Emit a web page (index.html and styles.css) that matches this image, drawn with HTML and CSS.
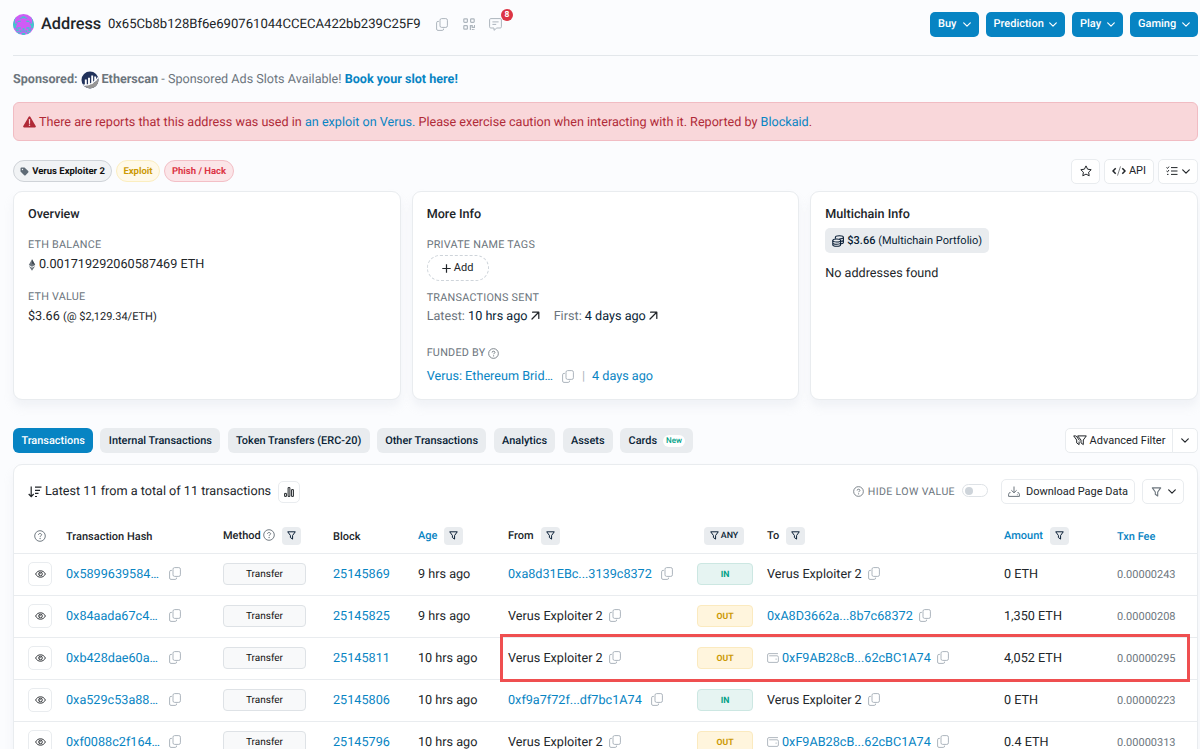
FILE: index.html
```html
<!DOCTYPE html>
<html lang="en">
<head>
    <meta charset="UTF-8">
    <meta name="viewport" content="width=device-width, initial-scale=1.0">
    <title>Address 0x65Cb8b128Bf6e690761044CCECA422bb239C25F9</title>
    <link rel="stylesheet" href="styles.css">
</head>
<body>
    <!-- Icon definitions -->
    <svg class="icon-defs" width="0" height="0">
        <symbol id="copy" viewBox="0 0 12 13"><rect x="4" y=".6" width="7.4" height="8.8" rx="1.6" fill="none" stroke="currentColor"/><path d="M2.9 3.4H2A1.4 1.4 0 0 0 .6 4.8V11A1.4 1.4 0 0 0 2 12.4h4.2A1.4 1.4 0 0 0 7.6 11v-.4" fill="none" stroke="currentColor"/></symbol>
        <symbol id="chevron" viewBox="0 0 8 5"><path d="M.7.8 4 4.1 7.3.8" fill="none" stroke="currentColor" stroke-width="1.2" stroke-linecap="round" stroke-linejoin="round"/></symbol>
        <symbol id="funnel" viewBox="0 0 10 10"><path d="M.8.9h8.4L6.2 5v4L3.8 7.3V5z" fill="none" stroke="currentColor" stroke-width="1.1" stroke-linejoin="round"/></symbol>
        <symbol id="help" viewBox="0 0 12 12"><circle cx="6" cy="6" r="5.3" fill="none" stroke="currentColor" stroke-width=".95"/><path d="M4.5 4.9c0-.9.6-1.4 1.5-1.4s1.6.5 1.6 1.3c0 1-1.5 1-1.5 2" fill="none" stroke="currentColor"/><circle cx="6.1" cy="8.5" r=".65" fill="currentColor"/></symbol>
        <symbol id="eye" viewBox="0 0 11 8"><path d="M.6 4C1.8 1.8 3.4.8 5.5.8S9.2 1.8 10.4 4C9.2 6.2 7.6 7.2 5.5 7.2S1.8 6.2.6 4z" fill="none" stroke="currentColor" stroke-width=".9"/><circle cx="5.5" cy="4" r="1.8" fill="none" stroke="currentColor" stroke-width=".9"/><path d="M4.2 4.2A1.3 1.3 0 0 0 5.5 2.9" fill="none" stroke="currentColor" stroke-width=".7"/></symbol>
        <symbol id="arrow" viewBox="0 0 9 9"><path d="M1.6 1.2h6.2v6.2M7.7 1.3 1 8" fill="none" stroke="currentColor" stroke-width="1.25" stroke-linecap="round" stroke-linejoin="round"/></symbol>
        <symbol id="wallet" viewBox="0 0 12 10"><path d="M10.6.6H2A1.4 1.4 0 0 0 .6 2v6A1.4 1.4 0 0 0 2 9.4h8A1.4 1.4 0 0 0 11.4 8V4.2A1.4 1.4 0 0 0 10 2.8H2.6" fill="none" stroke="currentColor" stroke-width=".95" stroke-linecap="round"/><circle cx="9.1" cy="6.1" r=".7" fill="currentColor"/></symbol>
    </svg>

    <!-- Page header -->
    <header class="page-header">
        <svg class="avatar" viewBox="0 0 22 22">
            <clipPath id="round"><circle cx="11" cy="11" r="11"/></clipPath>
            <g clip-path="url(#round)">
                <rect width="22" height="22" fill="#cf5cf5"/>
                <path d="M0 3h3v2H0zM19 3h3v2h-3zM0 5h2v7H0zM20 5h2v7h-2zM7 4h2v1H7zM13 4h2v1h-2zM9 2.500h4v2H9zM5 7h3v1.500H5zM14 7h3v1.500h-3zM2 10h2v2H2zM18 10h2v2h-2zM0 12h3v3H0zM19 12h3v3h-3zM5 14h3v1.500H5zM14 14h3v1.500h-3zM3 16h3v2H3zM16 16h3v2h-3zM7 17h2v2H7zM13 17h2v2h-2zM10 15h2v2h-2zM0 19h7v3H0zM15 19h7v3h-7zM9 20h4v2H9z" fill="#3ec8cc"/>
                <path d="M3 8h2v2H3zM17 8h2v2h-2zM3 14h2v2H3zM17 14h2v2h-2zM9 17h4v2H9z" fill="#8b85e8"/>
            </g>
        </svg>
        <h1>Address</h1>
        <span class="address">0x65Cb8b128Bf6e690761044CCECA422bb239C25F9</span>
        <svg class="copy-icon"><use href="#copy"/></svg>
        <svg class="qr-icon" viewBox="0 0 12 12" fill="none" stroke="currentColor" stroke-width="1.2">
            <rect x=".8" y=".8" width="3.6" height="3.6" rx=".8"/><rect x="7.6" y=".8" width="3.6" height="3.6" rx=".8"/><rect x=".8" y="7.6" width="3.6" height="3.6" rx=".8"/>
            <path d="M7.4 7v5M7 7.6h2.2v1.8h2.4V7M10.8 11v1M9.4 11v1"/>
        </svg>
        <span class="comments">
            <svg viewBox="0 0 13 13" fill="none" stroke="currentColor" stroke-linejoin="round"><path d="M1.8.6h9.4a1.2 1.2 0 0 1 1.2 1.2v7a1.2 1.2 0 0 1-1.2 1.2H7.8L5 12.3V10H1.8A1.2 1.2 0 0 1 .6 8.8v-7A1.2 1.2 0 0 1 1.8.6zM3.4 3.9h6.2M3.4 6.4h3.8"/></svg>
            <span class="count">8</span>
        </span>
        <nav class="promo-buttons">
            <a class="buy">Buy <svg class="chevron"><use href="#chevron"/></svg></a>
            <a class="prediction">Prediction <svg class="chevron"><use href="#chevron"/></svg></a>
            <a class="play">Play <svg class="chevron"><use href="#chevron"/></svg></a>
            <a class="gaming">Gaming <svg class="chevron"><use href="#chevron"/></svg></a>
        </nav>
    </header>

    <div class="sponsored">
        <b>Sponsored:</b>
        <svg viewBox="0 0 18 18"><clipPath id="logo"><circle cx="9" cy="9" r="8.5"/></clipPath><g clip-path="url(#logo)"><rect width="18" height="18" fill="#21325b"/><path d="M4.8 8.5V14M8 6.8V14M11.200 4.5V13M14.200 5.500V10" stroke="#fff" stroke-width="1.9"/><path d="M18 6.5C15 12 9 14.500 2 14.500V18h16z" fill="#979695"/><path d="M1 14.2C8 14.700 14.500 11.500 17.500 6" fill="none" stroke="#fcfcfd" stroke-width="1.3"/></g></svg>
        <span><b>Etherscan</b> - Sponsored Ads Slots Available! <a>Book your slot here!</a></span>
    </div>

    <div class="alert">
        <svg viewBox="0 0 13 12"><path d="M6.5.3a.9.9 0 0 1 .8.5l5.4 9.3a.9.9 0 0 1-.8 1.4H1.1a.9.9 0 0 1-.8-1.4L5.7.8a.9.9 0 0 1 .8-.5z" fill="currentColor"/><path d="M6.5 3.6v3.7" stroke="#f8d7da" stroke-width="1.2" stroke-linecap="round"/><circle cx="6.5" cy="9.3" r=".75" fill="#f8d7da"/></svg>
        <span>There are reports that this address was used in <a>an exploit on Verus.</a> Please exercise caution when interacting with it. Reported by <a>Blockaid</a>.</span>
    </div>

    <!-- Labels and page actions -->
    <div class="labels">
        <span class="label label-name"><svg viewBox="0 0 9 9"><path d="M.5 1.5a1 1 0 0 1 1-1h3L8.2 4.1a1 1 0 0 1 0 1.4L5.6 8.2a1 1 0 0 1-1.4 0L.5 4.5z" fill="#5f6b76"/><circle cx="2.5" cy="2.5" r=".7" fill="#f1f3f5"/></svg>Verus Exploiter 2</span>
        <span class="label label-exploit">Exploit</span>
        <span class="label label-phish">Phish / Hack</span>
        <div class="actions">
            <button class="btn btn-star"><svg viewBox="0 0 12 12"><path d="m6 .9 1.6 3.3 3.6.5-2.6 2.5.6 3.6L6 9.1l-3.2 1.7.6-3.6L.8 4.7l3.6-.5z" fill="none" stroke="currentColor" stroke-linejoin="round"/></svg></button>
            <button class="btn btn-api"><svg viewBox="0 0 14 10"><path d="M3.7 2.2 1 5l2.7 2.8M10.3 2.2 13 5l-2.7 2.8" fill="none" stroke="currentColor" stroke-width="1.5"/><path d="M8.5.4 5.5 9.6" stroke="currentColor" stroke-width=".8" opacity=".7"/></svg>API</button>
            <button class="btn btn-list"><svg class="list" viewBox="0 0 12 10"><path d="m.5 1.5 1 .9L3 .6M.5 5l1 .9L3 4M5 1.6h6.5M5 5h6.5M5 8.4h6.5M1 8.4h1.5" fill="none" stroke="currentColor"/></svg><svg class="chevron"><use href="#chevron"/></svg></button>
        </div>
    </div>

    <!-- Summary cards -->
    <section class="cards">
        <div class="card">
            <h2>Overview</h2>
            <h3>ETH BALANCE</h3>
            <p class="balance"><svg viewBox="0 0 8 13"><path d="M4 .3 7.5 6.5 4 8.5.5 6.5zM.6 7.5 4 9.5l3.4-2L4 12.6z" fill="#6c757d"/><path d="M4 .3 7.5 6.5 4 5z" fill="#3f474f"/></svg>0.001719292060587469 ETH</p>
            <h3 class="value-title">ETH VALUE</h3>
            <p>$3.66 <small>(@ $2,129.34/ETH)</small></p>
        </div>
        <div class="card more-info">
            <h2>More Info</h2>
            <h3>PRIVATE NAME TAGS</h3>
            <button class="add"><svg viewBox="0 0 9 9"><path d="M4.5.3v8.4M.3 4.5h8.4" stroke="currentColor" stroke-width="1.2"/></svg>Add</button>
            <h3>TRANSACTIONS SENT</h3>
            <p class="sent"><span class="muted">Latest:</span> <b>10 hrs ago</b> <svg><use href="#arrow"/></svg><span class="muted first">First:</span> <b>4 days ago</b> <svg><use href="#arrow"/></svg></p>
            <h3 class="funded-title">FUNDED BY <svg><use href="#help"/></svg></h3>
            <p class="funded"><a>Verus: Ethereum Brid…</a><svg class="copy-icon"><use href="#copy"/></svg><span class="divider">|</span><a>4 days ago</a></p>
        </div>
        <div class="card">
            <h2>Multichain Info</h2>
            <span class="portfolio"><svg viewBox="0 0 12 12" fill="none" stroke="currentColor" stroke-width="1.1"><ellipse cx="4.7" cy="5.5" rx="3.9" ry="1.5"/><path d="M.8 5.5v4.3c0 .9 1.7 1.5 3.9 1.5s3.9-.6 3.9-1.5V5.5M.8 7.7c0 .9 1.7 1.5 3.9 1.5s3.9-.6 3.9-1.5M3.4 3.7V2.3C3.4 1.4 5.2.8 7.4.8s4 .6 4 1.5-1.8 1.5-4 1.5M11.4 2.3v5.2c0 .6-.8 1.1-2.4 1.3M11.4 4.9c0 .6-.8 1.1-2.4 1.3"/></svg><b>$3.66</b>&nbsp;(Multichain Portfolio)</span>
            <p class="no-addresses">No addresses found</p>
        </div>
    </section>

    <!-- Tabs -->
    <nav class="tabs">
        <a class="tab active">Transactions</a>
        <a class="tab">Internal Transactions</a>
        <a class="tab">Token Transfers (ERC-20)</a>
        <a class="tab">Other Transactions</a>
        <a class="tab">Analytics</a>
        <a class="tab">Assets</a>
        <a class="tab">Cards <span class="new">New</span></a>
        <div class="btn-group">
            <button class="btn"><svg viewBox="0 0 14 11"><path d="M4.6.9h8.7L10.3 5v4.6L8 7.9V5z" fill="none" stroke="currentColor" stroke-linejoin="round"/><path d="M2.8.9H.7l3 4.1v2.9l2.4 1.7V6.5M3.2.9l3.2 4.5" fill="none" stroke="currentColor" stroke-linejoin="round"/></svg>Advanced Filter</button>
            <button class="btn caret"><svg class="chevron"><use href="#chevron"/></svg></button>
        </div>
    </nav>

    <!-- Transactions -->
    <section class="card transactions">
        <div class="toolbar">
            <svg class="sort" viewBox="0 0 14 12"><path d="M3.2.6v10M.7 8l2.5 2.7L5.7 8M7 1.2h6.5M7 4.3h5M7 7.4h3.5M7 10.5h2" fill="none" stroke="currentColor" stroke-width="1.2"/></svg>
            <span class="total">Latest 11 from a total of 11 transactions</span>
            <button class="btn chart"><svg viewBox="0 0 10 10"><path d="M.6 6.4h1.8v3H.6zM4.1.6h1.8v8.8H4.1zM7.6 2.6h1.8v6.8H7.6z" fill="none" stroke="currentColor" stroke-linejoin="round"/></svg></button>
            <span class="hide-low"><svg><use href="#help"/></svg>HIDE LOW VALUE</span>
            <span class="switch"></span>
            <button class="btn download"><svg viewBox="0 0 12 11"><path d="M6 .5v6M3.4 4.3 6 6.8l2.6-2.5M2.5 6.6h-1l-.9 1.6v2.2h10.8V8.2l-.9-1.6h-1" fill="none" stroke="#6c757d" stroke-linejoin="round"/><circle cx="9.3" cy="8.7" r=".5" fill="#6c757d"/></svg>Download Page Data</button>
            <button class="btn filter-menu"><svg class="funnel"><use href="#funnel"/></svg><svg class="chevron"><use href="#chevron"/></svg></button>
        </div>
        <table>
            <colgroup><col class="c-eye"><col class="c-hash"><col class="c-method"><col class="c-block"><col class="c-age"><col class="c-from"><col class="c-dir"><col class="c-to"><col class="c-amount"><col class="c-fee"></colgroup>
            <thead>
                <tr>
                    <th class="eye-head"><svg class="help"><use href="#help"/></svg></th>
                    <th class="plain">Transaction Hash</th>
                    <th><div class="head">Method<svg class="help"><use href="#help"/></svg><span class="filter"><svg><use href="#funnel"/></svg></span></div></th>
                    <th class="plain">Block</th>
                    <th><div class="head"><a>Age</a><span class="filter"><svg><use href="#funnel"/></svg></span></div></th>
                    <th><div class="head">From<span class="filter"><svg><use href="#funnel"/></svg></span></div></th>
                    <th><div class="head"><span class="filter any"><svg><use href="#funnel"/></svg>ANY</span></div></th>
                    <th><div class="head">To<span class="filter"><svg><use href="#funnel"/></svg></span></div></th>
                    <th><div class="head"><a>Amount</a><span class="filter"><svg><use href="#funnel"/></svg></span></div></th>
                    <th class="plain"><a>Txn Fee</a></th>
                </tr>
            </thead>
            <tbody id="rows"></tbody>
        </table>
    </section>

    <script>
        const me = 'Verus Exploiter 2';
        const transactions = [
            { hash: '0x5899639584…', block: '25145869', age: '9 hrs ago', from: '0xa8d31EBc...3139c8372', to: me, amount: '0', fee: '0.00000243' },
            { hash: '0x84aada67c4…', block: '25145825', age: '9 hrs ago', from: me, to: '0xA8D3662a...8b7c68372', amount: '1,350', fee: '0.00000208' },
            { hash: '0xb428dae60a…', block: '25145811', age: '10 hrs ago', from: me, to: '0xF9AB28cB...62cBC1A74', wallet: true, amount: '4,052', fee: '0.00000295', marked: true },
            { hash: '0xa529c53a88…', block: '25145806', age: '10 hrs ago', from: '0xf9a7f72f...df7bc1A74', to: me, amount: '0', fee: '0.00000223' },
            { hash: '0xf0088c2f164…', block: '25145796', age: '10 hrs ago', from: me, to: '0xF9AB28cB...62cBC1A74', wallet: true, amount: '0.4', fee: '0.00000313' }
        ];

        const copy = '<svg class="copy-icon"><use href="#copy"/></svg>';

        // The page's own address is plain text, every other one is a link
        function party(name) {
            return (name === me ? `<span>${name}</span>` : `<a>${name}</a>`) + copy;
        }

        document.getElementById('rows').innerHTML = transactions.map(t => `
            <tr>
                <td><span class="btn view"><svg><use href="#eye"/></svg></span></td>
                <td><div class="cell hash"><a>${t.hash}</a>${copy}</div></td>
                <td><span class="method">Transfer</span></td>
                <td><a>${t.block}</a></td>
                <td>${t.age}</td>
                <td class="from"><div class="cell">${party(t.from)}</div>${t.marked ? '<span class="marker"></span>' : ''}</td>
                <td>${t.to === me ? '<span class="dir in">IN</span>' : '<span class="dir out">OUT</span>'}</td>
                <td><div class="cell to">${t.wallet ? '<svg class="wallet"><use href="#wallet"/></svg>' : ''}${party(t.to)}</div></td>
                <td>${t.amount} ETH</td>
                <td class="fee">${t.fee}</td>
            </tr>`).join('');
    </script>
</body>
</html>
```
FILE: styles.css
```css
* {
    box-sizing: border-box;
}

body {
    margin: 0;
    padding: 0 2px 0 13px;
    height: 749px;
    overflow: hidden;
    background-color: #fbfcfe;
    color: #212529;
    font-family: Roboto, "Liberation Sans", sans-serif;
    font-size: 12.65px;
    line-height: 18px;
    text-rendering: geometricPrecision;
}

h1, h2, h3, p {
    margin: 0;
}

h1, h2, b {
    font-weight: 500;
}

a {
    color: #0784c3;
}

svg {
    flex: none;
}

button {
    font: inherit;
    color: inherit;
}

.icon-defs {
    position: absolute;
}

.copy-icon {
    width: 12px;
    height: 13px;
    color: #adb5bd;
}

.chevron {
    width: 8px;
    height: 5px;
}

/* Header */
.page-header {
    display: flex;
    align-items: center;
    height: 56px;
    padding-bottom: 7px;
    border-bottom: 1px solid #e3e7eb;
}

.avatar {
    width: 21px;
    height: 21px;
    margin-right: 7px;
}

h1 {
    width: 67px;
    font-size: 16.3px;
}

.address {
    width: 328px;
    padding-top: 1px;
    font-size: 13.1px;
}

.qr-icon {
    width: 12px;
    height: 12px;
    margin: 0 14px 0 15px;
    color: #adb5bd;
}

.comments {
    position: relative;
    display: flex;
    color: #adb5bd;
}

.comments svg {
    width: 13px;
    height: 13px;
}

.count {
    position: absolute;
    left: 12px;
    top: -9px;
    width: 12px;
    height: 12px;
    border-radius: 50%;
    background-color: #dc3545;
    color: #fff;
    font-size: 8.5px;
    font-weight: 700;
    line-height: 12px;
    text-align: center;
}

.promo-buttons {
    display: flex;
    gap: 7px;
    margin-left: auto;
}

.promo-buttons a {
    display: flex;
    align-items: center;
    justify-content: space-between;
    height: 25px;
    padding: 0 8px;
    border-radius: 5px;
    background-color: #0784c3;
    color: #fff;
    font-size: 11px;
    font-weight: 500;
}

.buy { width: 48.5px; }
.prediction { width: 79.5px; }
.play { width: 51px; }
.gaming { width: 68px; }

.sponsored {
    display: flex;
    align-items: center;
    height: 46px;
    padding-top: 2px;
    color: #6c757d;
    font-size: 12.6px;
}

.sponsored svg {
    width: 18px;
    height: 18px;
    margin: 0 3px;
}

.sponsored a, .sponsored b {
    font-weight: 700;
}

.alert {
    display: flex;
    align-items: center;
    height: 39px;
    padding-left: 9px;
    border: 1px solid #f1bcc3;
    border-radius: 6px;
    background-color: #f9d7da;
    color: #b02a37;
    font-size: 12.62px;
}

.alert svg {
    width: 13px;
    height: 12px;
    margin-right: 3px;
}

.alert span {
    padding-top: 2px;
}

/* Labels */
.labels {
    display: flex;
    align-items: center;
    gap: 4px;
    height: 50px;
    padding-top: 10px;
}

.label {
    display: flex;
    align-items: center;
    justify-content: center;
    height: 22px;
    padding-top: 1px;
    border: 1px solid;
    border-radius: 11px;
    font-size: 9.5px;
    font-weight: 700;
}

.label-name {
    width: 99px;
    border-color: #cfd3d8;
    background-color: #f1f3f5;
    color: #111;
}

.label-name svg {
    width: 9px;
    height: 9px;
    margin: 0 3px 1px 0;
}

.label-exploit {
    width: 44px;
    border-color: #fbeec0;
    background-color: #fff9e8;
    color: #cc9a06;
}

.label-phish {
    width: 70px;
    border-color: #f3bfc6;
    background-color: #fbe5e8;
    color: #dc3545;
}

.actions {
    display: flex;
    gap: 4px;
    margin-left: auto;
}

.btn {
    display: flex;
    align-items: center;
    justify-content: center;
    height: 25px;
    padding: 0;
    border: 1px solid #e9ecef;
    border-radius: 5px;
    background-color: #fff;
    font-size: 11px;
}

.btn-star { width: 29px; }
.btn-star svg { width: 12px; height: 12px; }
.btn-api { width: 50px; gap: 3px; }
.btn-api svg { width: 14px; height: 10px; }
.btn-list { width: 40px; gap: 4px; }
.btn-list .list { width: 12px; height: 10px; }

/* Cards */
.cards {
    display: grid;
    grid-template-columns: repeat(3, 1fr);
    gap: 11px;
    height: 209px;
}

.card {
    padding: 14px 14px 0;
    border: 1px solid #e9ecef;
    border-radius: 9px;
    background-color: #fff;
    box-shadow: 0 7px 10px rgba(189, 197, 209, .17);
}

h2 {
    margin-bottom: 12px;
    font-size: 12.6px;
    line-height: 18px;
}

h3 {
    color: #6c757d;
    font-size: 10.8px;
    font-weight: 400;
    line-height: 18px;
    letter-spacing: .25px;
}

.balance {
    display: flex;
    align-items: center;
    margin: 2px 0 14px;
}

.balance svg {
    width: 8px;
    height: 12px;
    margin-right: 3px;
}

.card small {
    font-size: 11px;
}

.value-title {
    margin-bottom: 2px;
}

.add {
    display: flex;
    align-items: center;
    justify-content: center;
    gap: 3px;
    width: 62px;
    height: 26px;
    margin: 1px 0 8px;
    border: 1px dashed #ced4da;
    border-radius: 13px;
    background: none;
    font-size: 11px;
}

.add svg {
    width: 9px;
    height: 9px;
}

.muted {
    color: #6c757d;
}

.sent {
    margin: 1px 0 18px;
}

.sent b {
    font-weight: 400;
    color: #081d35;
}

.sent svg {
    width: 9px;
    height: 9px;
}

.first {
    margin-left: 14px;
}

.funded-title {
    display: flex;
    align-items: center;
    gap: 3px;
}

.funded-title svg {
    width: 11px;
    height: 11px;
}

.funded {
    display: flex;
    align-items: center;
    margin-top: 6px;
}

.funded .copy-icon {
    margin: 0 8px 1px 9px;
}

.divider {
    margin-right: 7px;
    color: #adb5bd;
}

.card:last-child h2 {
    margin-bottom: 4px;
}

.portfolio {
    display: flex;
    align-items: center;
    width: 164px;
    height: 25px;
    padding-left: 7px;
    border-radius: 5px;
    background-color: #e9ecef;
    color: #081d35;
    font-size: 11px;
}

.portfolio svg {
    width: 12px;
    height: 12px;
    margin-right: 3px;
}

.no-addresses {
    margin-top: 12px;
    font-size: 12.6px;
}

/* Tabs */
.tabs {
    display: flex;
    gap: 7.200px;
    margin: 28px 0 11px;
}

.tab {
    display: flex;
    align-items: center;
    height: 25px;
    padding: 0 8.4px;
    border-radius: 6px;
    background-color: #e9ecef;
    color: #081d35;
    font-size: 10.93px;
    font-weight: 500;
}

.tab.active {
    background-color: #0784c3;
    color: #fff;
}

.new {
    margin-left: 6px;
    padding: 0 3px;
    border-radius: 6px;
    background-color: #fff;
    color: #00a186;
    font-size: 8px;
    line-height: 12px;
}

.btn-group {
    display: flex;
    margin-left: auto;
}

.btn-group .btn {
    width: 108px;
    gap: 3px;
    border-radius: 5px 0 0 5px;
}

.btn-group svg:not(.chevron) {
    width: 14px;
    height: 11px;
}

.btn-group .caret {
    width: 26px;
    margin-left: -1px;
    border-radius: 0 5px 5px 0;
}

/* Transactions */
.transactions {
    height: 320px;
    padding: 0;
}

.toolbar {
    display: flex;
    align-items: center;
    height: 53px;
    padding: 0 13px 0 14px;
}

.sort {
    width: 14px;
    height: 12px;
    margin-right: 3px;
}

.total {
    margin-right: 7px;
}

.chart {
    width: 22px;
    height: 22px;
}

.chart svg {
    width: 10px;
    height: 10px;
}

.hide-low {
    display: flex;
    align-items: center;
    gap: 4px;
    margin-left: auto;
    color: #6c757d;
    font-size: 10.6px;
    letter-spacing: .35px;
}

.hide-low svg {
    width: 11px;
    height: 11px;
}

.switch {
    width: 26px;
    height: 13px;
    margin: 0 13px 2px 7px;
    padding: 1.5px;
    border: 1px solid #dee2e6;
    border-radius: 7px;
    background-color: #fff;
}

.switch::before {
    content: "";
    display: block;
    width: 8px;
    height: 8px;
    border-radius: 50%;
    background-color: #ced4da;
}

.download {
    width: 134px;
    gap: 6px;
    margin-right: 7px;
}

.download svg {
    width: 12px;
    height: 11px;
}

.filter-menu {
    width: 42px;
    gap: 6px;
}

.funnel {
    width: 11px;
    height: 10px;
    color: #6c757d;
}

table {
    width: 100%;
    table-layout: fixed;
    border-collapse: separate;
    border-spacing: 0;
}

.c-eye { width: 52px; }
.c-hash { width: 157px; }
.c-method { width: 110px; }
.c-block { width: 85px; }
.c-age { width: 90px; }
.c-from { width: 189px; }
.c-dir { width: 70px; }
.c-to { width: 237px; }
.c-amount { width: 113px; }

th, td {
    padding: 0;
    border-bottom: 1px solid #e9ecef;
    text-align: left;
    white-space: nowrap;
}

th {
    height: 36px;
    font-size: 11px;
    font-weight: 500;
}

.plain {
    padding-top: 2px;
}

td {
    height: 42px;
}

th:first-child, td:first-child {
    padding-left: 14px;
}

.eye-head {
    line-height: 0;
}

.eye-head svg {
    margin-left: 6px;
}

.help {
    width: 12px;
    height: 12px;
    color: #6c757d;
}

.head {
    display: flex;
    align-items: center;
}

.head .help {
    margin: 0 0 1px 2px;
}

.filter {
    display: flex;
    align-items: center;
    justify-content: center;
    gap: 2px;
    width: 19px;
    height: 18px;
    margin-left: 7px;
    border-radius: 4px;
    background-color: #e9ecef;
    color: #081d35;
}

.filter svg {
    width: 9px;
    height: 9px;
}

.any {
    width: 40px;
    font-size: 8.9px;
}

.view {
    width: 24px;
    height: 24px;
    margin-bottom: 1px;
}

.view svg {
    width: 11px;
    height: 8px;
}

.cell {
    display: flex;
    align-items: center;
    gap: 6.5px;
}

.cell .copy-icon {
    margin-bottom: 1.5px;
}

.hash a {
    width: 96.5px;
}

.from a {
    margin-right: 3px;
}

.method, .dir {
    display: block;
    height: 22px;
    margin-bottom: 1px;
    border: 1px solid #dee2e6;
    border-radius: 4px;
    background-color: #f8f9fa;
    font-size: 10px;
    line-height: 21px;
    text-align: center;
}

.method {
    width: 83px;
    color: #111;
}

.dir {
    width: 56px;
    font-size: 8.7px;
    font-weight: 700;
    line-height: 22px;
}

.in {
    border-color: #cce7e2;
    background-color: #e6f4f2;
    color: #00a186;
}

.out {
    border-color: #fbeabf;
    background-color: #fff5dd;
    color: #cc9a06;
}

.to .wallet {
    width: 12px;
    height: 10px;
    margin: 0 -3.5px 1.5px 0;
    color: #adb5bd;
}

.fee {
    color: #6c757d;
    font-size: 11px;
}

/* Frame round the flagged transfer */
.from {
    position: relative;
}

.marker {
    position: absolute;
    left: -8px;
    top: -4px;
    width: 690px;
    height: 48px;
    border: 3px solid #ef4f50;
    pointer-events: none;
}
```
